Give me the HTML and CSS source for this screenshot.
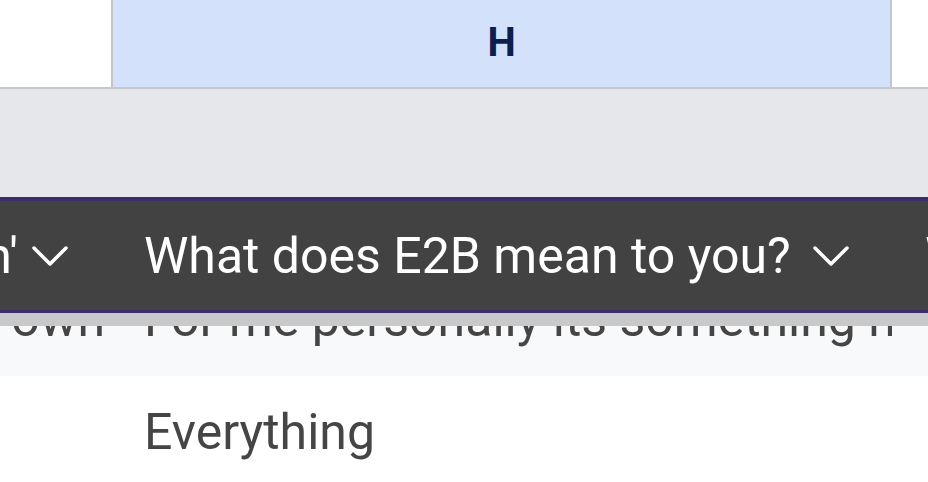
FILE: index.html
```html
<!DOCTYPE html>
<html lang="en">
<head>
    <meta charset="UTF-8">
    <meta name="viewport" content="width=device-width, initial-scale=1.0">
    <title>Survey responses</title>
    <link rel="stylesheet" href="styles.css">
</head>
<body>

    <div class="sheet">
        <!-- column letters -->
        <div class="grid letters">
            <div class="letter"></div>
            <div class="letter active">H</div>
            <div class="letter"></div>
        </div>

        <div class="toolbar"></div>

        <!-- frozen header row -->
        <div class="grid head">
            <div class="head-cell clipped">
                <span class="head-text"><span>Describe it in one word: 'Fun'</span></span>
                <svg class="chevron" width="36" height="22" viewBox="0 0 36 22"><polyline points="2,3 18,19 34,3"/></svg>
            </div>
            <div class="head-cell">
                <span class="head-text">What does E2B mean to you?</span>
                <svg class="chevron" width="36" height="22" viewBox="0 0 36 22"><polyline points="2,3 18,19 34,3"/></svg>
            </div>
            <div class="head-cell">
                <span class="head-text">Why did you join?</span>
            </div>
        </div>
        <div class="head-shadow"></div>

        <!-- data rows -->
        <div class="grid row alt">
            <div class="cell clipped"><span>Something of my own</span></div>
            <div class="cell"><span>For me personally its something h</span></div>
            <div class="cell"><span>It was time</span></div>
        </div>
        <div class="grid row">
            <div class="cell clipped"><span></span></div>
            <div class="cell"><span>Everything</span></div>
            <div class="cell"><span>Unity</span></div>
        </div>
    </div>

</body>
</html>
```

FILE: styles.css
```css
body {
    margin: 0;
    font-family: Roboto, "Liberation Sans", Arial, sans-serif;
    background-color: #ffffff;
    overflow: hidden;
}
.sheet {
    width: 928px;
}
.grid {
    display: grid;
    grid-template-columns: 111px 781px 1fr;
}

/* column letters */
.letters {
    height: 87px;
    border-bottom: 2px solid #c6c7ca;
}
.letter {
    background: white;
}
.letter.active {
    background-color: #d4e1fa;
    border-left: 2px solid #c3c5ca;
    border-right: 2px solid #c3c5ca;
    color: #0c1f4e;
    font-weight: bold;
    font-size: 40px;
    padding-bottom: 3px;
    display: flex;
    justify-content: center;
    align-items: center;
}

.toolbar {
    height: 108px;
    background-color: #e6e7ea;
}

/* frozen header */
.head {
    background-color: #424242;
    border-top: 4px solid #3d2e69;
    border-bottom: 3px solid #3d2e69;
    height: 109px;
}
.head-shadow {
    height: 13px;
    background-color: #c9c9c9;
}
.head-cell {
    display: flex;
    align-items: center;
    padding-left: 33px;
    color: white;
    font-size: 50px;
    line-height: 50px;
    white-space: nowrap;
    overflow: hidden;
}
.head-text {
    min-width: 0;
}
.chevron {
    margin-left: auto;
    margin-right: 43px;
    flex-shrink: 0;
}
.chevron polyline {
    fill: none;
    stroke: white;
    stroke-width: 3.5;
    stroke-linecap: round;
    stroke-linejoin: round;
}
.head-cell.clipped {
    padding-left: 0;
}
.head-cell.clipped .head-text {
    flex: 1;
    display: flex;
    justify-content: flex-end;
    overflow: hidden;
    margin-right: 14px;
}
.head-cell.clipped .chevron {
    margin-left: 0;
}

/* rows */
.row {
    height: 140px;
    color: #454545;
    font-size: 50px;
    line-height: 50px;
}
.row.alt {
    height: 50px;
    background-color: #f8f9fa;
    overflow: hidden;
}
.cell {
    padding-left: 33px;
    padding-top: 31px;
    white-space: nowrap;
    overflow: hidden;
}
.row.alt .cell {
    padding-top: 0;
}
.row.alt .cell span {
    display: block;
    margin-top: -32px;
}
.cell.clipped {
    padding-left: 0;
    padding-right: 6px;
    display: flex;
    justify-content: flex-end;
}
.row.alt .cell.clipped span {
    flex-shrink: 0;
}
```
